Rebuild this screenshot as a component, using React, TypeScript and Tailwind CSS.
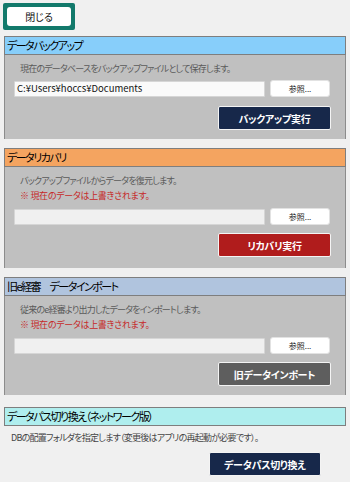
import React from "react";

const font = "font-['Noto_Sans_CJK_JP',sans-serif] [font-feature-settings:'palt']";

const RefButton = () => (
    <button className="w-[60px] h-[17px] bg-white rounded-[3px] border border-[#e2e2e2] text-[8px] text-[#222] flex items-center justify-center">
        参照...
    </button>
);

const PathInput = ({ value = "", bg = "bg-[#f0f0f0]" }: { value?: string; bg?: string }) => (
    <div
        className={`w-[251px] h-[16px] ${bg} border border-[#d6d6d6] rounded-[1px] text-[9.5px] text-[#111] pl-[2px] flex items-center leading-none`}
    >
        {value}
    </div>
);

const ActionButton = ({ label, color, width = "w-[113px]" }: { label: string; color: string; width?: string }) => (
    <button
        className={`${width} h-[24px] ${color} border border-[#f4f4f4] rounded-[2px] text-white font-bold text-[10px] tracking-[-0.3px] flex items-center justify-center`}
    >
        {label}
    </button>
);

const Header = ({ title, color }: { title: string; color: string }) => (
    <div
        className={`h-[19px] ${color} border border-[#7e7e7e] text-[11px] tracking-[-1.5px] text-black pl-[2px] flex items-center leading-none`}
    >
        {title}
    </div>
);

export default function App() {
    return (
        <div className={`w-[350px] h-[482px] bg-[#f0f0f0] overflow-hidden flex flex-col ${font}`}>
            {/* Close */}
            <div className="mt-[3px] ml-[3px] w-[72px] h-[27px] bg-[#12796b] p-[4px] rounded-[2px]">
                <button className="w-full h-full bg-white rounded-[3px] text-[10px] text-[#111] flex items-center justify-center">
                    閉じる
                </button>
            </div>

            {/* Backup */}
            <div className="mt-[6px] mx-[4px]">
                <Header title="データバックアップ" color="bg-[#87cefa]" />
                <div className="bg-[#c0c0c0] border-x border-[#8c8c8c] h-[84px] pt-[7px] flex flex-col">
                    <p className="h-[13px] pl-[15px] text-[9px] tracking-[-0.8px] text-[#5a5a5a] leading-[13px]">
                        現在のデータベースをバックアップファイルとして保存します。
                    </p>
                    <div className="mt-[5px] pl-[9px] flex items-center gap-[5px]">
                        <PathInput value="C:¥Users¥hoccs¥Documents" bg="bg-[#fafafa]" />
                        <RefButton />
                    </div>
                    <div className="mt-[9px] pl-[213px]">
                        <ActionButton label="バックアップ実行" color="bg-[#17284a]" />
                    </div>
                </div>
            </div>

            {/* Recovery */}
            <div className="mt-[9px] mx-[4px]">
                <Header title="データリカバリ" color="bg-[#f4a460]" />
                <div className="bg-[#c0c0c0] border-x border-[#8c8c8c] h-[101px] pt-[7px] flex flex-col">
                    <p className="h-[13px] pl-[15px] text-[9px] tracking-[-0.8px] text-[#5a5a5a] leading-[13px]">
                        バックアップファイルからデータを復元します。
                    </p>
                    <p className="mt-[2px] h-[13px] pl-[15px] text-[9px] tracking-[-0.3px] text-[#c62828] leading-[13px]">
                        ※ 現在のデータは上書きされます。
                    </p>
                    <div className="mt-[6px] pl-[9px] flex items-center gap-[5px]">
                        <PathInput />
                        <RefButton />
                    </div>
                    <div className="mt-[8px] pl-[213px]">
                        <ActionButton label="リカバリ実行" color="bg-[#b01c1c]" />
                    </div>
                </div>
            </div>

            {/* Import */}
            <div className="mt-[9px] mx-[4px]">
                <Header title="旧e経審　データインポート" color="bg-[#b0c4de]" />
                <div className="bg-[#c0c0c0] border-x border-[#8c8c8c] h-[99px] pt-[7px] flex flex-col">
                    <p className="h-[13px] pl-[15px] text-[9px] tracking-[-0.8px] text-[#5a5a5a] leading-[13px]">
                        従来のe経審より出力したデータをインポートします。
                    </p>
                    <p className="mt-[2px] h-[13px] pl-[15px] text-[9px] tracking-[-0.3px] text-[#c62828] leading-[13px]">
                        ※ 現在のデータは上書きされます。
                    </p>
                    <div className="mt-[6px] pl-[9px] flex items-center gap-[5px]">
                        <PathInput />
                        <RefButton />
                    </div>
                    <div className="mt-[8px] pl-[213px]">
                        <ActionButton label="旧データインポート" color="bg-[#5e5e5e]" />
                    </div>
                </div>
            </div>

            {/* Data path */}
            <div className="mt-[12px] mx-[4px]">
                <Header title="データパス切り換え（ネットワーク版）" color="bg-[#afeeee]" />
                <div className="pt-[5px] flex flex-col">
                    <p className="h-[13px] pl-[7px] text-[9px] tracking-[-0.75px] text-[#444] leading-[13px]">
                        DBの配置フォルダを指定します（変更後はアプリの再起動が必要です）。
                    </p>
                    <div className="mt-[8px] pl-[205px]">
                        <ActionButton label="データパス切り換え" color="bg-[#17284a]" width="w-[112px]" />
                    </div>
                </div>
            </div>
        </div>
    );
}
